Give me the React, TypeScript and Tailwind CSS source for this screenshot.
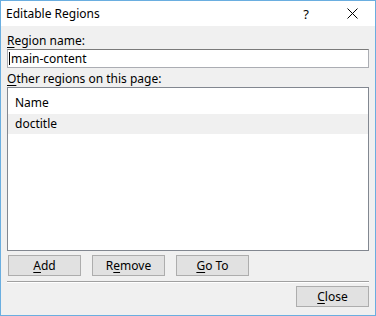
import { type ReactElement } from 'react';

// Windows style "Editable Regions" dialog

const font = { fontFamily: '"Noto Sans", "Liberation Sans", sans-serif' };

function WinButton({ children, className = '' }: { children: React.ReactNode; className?: string }): ReactElement {
  return (
    <button
      type="button"
      className={`h-[21px] w-[73px] border border-[#adadad] bg-[#e1e1e1] text-[12px] leading-[16px] text-black flex items-center justify-center ${className}`}
    >
      {children}
    </button>
  );
}

export default function App(): ReactElement {
  return (
    <div
      className="w-[376px] h-[316px] border border-[#6aaee0] bg-[#f0f0f0] flex flex-col text-[12px] leading-[16px] text-black overflow-hidden"
      style={font}
    >
      {/* title bar */}
      <div className="h-[25px] bg-white flex items-center shrink-0">
        <span className="pl-[5px] flex-1">Editable Regions</span>
        <div className="w-[46px] h-full flex items-center justify-center text-[13px]">?</div>
        <div className="w-[46px] h-full flex items-center justify-center">
          <svg width="11" height="11" viewBox="0 0 11 11">
            <path d="M0.5 0.5 L10.5 10.5 M10.5 0.5 L0.5 10.5" stroke="#000" strokeWidth="1" />
          </svg>
        </div>
      </div>

      {/* body */}
      <div className="flex flex-col px-[6px] pt-[7px]">
        <label className="h-[16px]">
          <span className="underline underline-offset-2">R</span>egion name:
        </label>
        <div className="h-[19px] bg-white border border-[#abadb3] border-t-[#7a7a7a] flex items-center pl-[1px]">
          <span className="w-[1px] h-[13px] bg-black mr-[1px]" />
          <span>main-content</span>
        </div>

        <label className="h-[16px] mt-[3px]">
          <span className="underline underline-offset-2">O</span>ther regions on this page:
        </label>
        <div className="h-[164px] bg-white border border-[#828790] flex flex-col">
          <div className="h-[26px] pt-[7px] pl-[7px]">Name</div>
          <div className="h-[20px] bg-[#f0f0f0] flex items-center pl-[7px]">doctitle</div>
        </div>

        <div className="flex gap-[11px] mt-[4px] pl-[1px]">
          <WinButton>
            <span className="underline underline-offset-2">A</span>dd
          </WinButton>
          <WinButton>
            <span>R</span>
            <span className="underline underline-offset-2">e</span>
            <span>move</span>
          </WinButton>
          <WinButton>
            <span className="underline underline-offset-2">G</span>o To
          </WinButton>
        </div>

        <div className="mt-[5px] border-t border-[#a0a0a0] border-b border-b-white" />

        <div className="flex justify-end mt-[3px]">
          <WinButton>
            <span className="underline underline-offset-2">C</span>lose
          </WinButton>
        </div>
      </div>
    </div>
  );
}
